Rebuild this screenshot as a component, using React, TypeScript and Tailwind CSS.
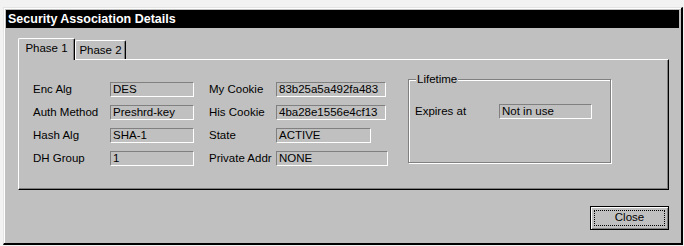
import React from "react";

type Field = { label: string; value: string; boxW: string };

const phase1Left: Field[] = [
  { label: "Enc Alg", value: "DES", boxW: "w-[84px]" },
  { label: "Auth Method", value: "Preshrd-key", boxW: "w-[84px]" },
  { label: "Hash Alg", value: "SHA-1", boxW: "w-[84px]" },
  { label: "DH Group", value: "1", boxW: "w-[84px]" },
];

const phase1Right: Field[] = [
  { label: "My Cookie", value: "83b25a5a492fa483", boxW: "w-[110px]" },
  { label: "His Cookie", value: "4ba28e1556e4cf13", boxW: "w-[110px]" },
  { label: "State", value: "ACTIVE", boxW: "w-[95px]" },
  { label: "Private Addr", value: "NONE", boxW: "w-[112px]" },
];

// sunken read-only edit box, win95 style
const ReadOnlyBox = ({ value, className }: { value: string; className: string }) => (
  <div
    className={`${className} h-[15px] flex items-center pl-[2px] border border-t-[#808080] border-l-[#808080] border-b-white border-r-white text-black whitespace-nowrap overflow-hidden`}
  >
    {value}
  </div>
);

const FieldColumn = ({ fields, labelW }: { fields: Field[]; labelW: string }) => (
  <div className="flex flex-col gap-y-[8px] mt-[9px]">
    {fields.map((f) => (
      <div key={f.label} className="flex items-center h-[15px]">
        <span className={`${labelW} whitespace-nowrap`}>{f.label}</span>
        <ReadOnlyBox value={f.value} className={f.boxW} />
      </div>
    ))}
  </div>
);

export default function App() {
  return (
    <div className="w-[684px] h-[246px] bg-[#f2f2f2] pt-[7px] pl-[3px] pr-px pb-px font-['Liberation_Sans',Arial,sans-serif] text-[11.5px] leading-none text-black">
      <div className="h-full flex flex-col bg-[#c0c0c0] border-l border-t border-l-[#e4e4e4] border-t-[#e4e4e4] border-r-2 border-b-2 border-r-black border-b-black p-[2px] shadow-[inset_1px_1px_0_#ffffff]">
        {/* title bar */}
        <div className="h-[18px] shrink-0 bg-black text-white font-bold text-[12.5px] flex items-center pl-[2px]">
          Security Association Details
        </div>

        <div className="flex-1 flex flex-col pl-[12px] pr-[10px] pt-[10px]">
          {/* tabs */}
          <div className="flex items-end h-[21px]">
            <div className="relative z-10 w-[57px] h-[22px] -mb-px bg-[#c0c0c0] border-l border-t border-l-white border-t-white border-r border-r-black rounded-t-[2px] shadow-[inset_-1px_0_0_#808080] flex items-center justify-center pb-[2px]">
              Phase 1
            </div>
            <div className="w-[51px] h-[19px] bg-[#c0c0c0] border-l border-t border-l-white border-t-white border-r border-r-black rounded-t-[2px] shadow-[inset_-1px_0_0_#808080] flex items-center justify-center pt-[2px]">
              Phase 2
            </div>
          </div>

          {/* tab page */}
          <div className="h-[131px] shrink-0 border-l border-t border-l-white border-t-white border-r border-b border-r-black border-b-black shadow-[inset_-1px_-1px_0_#808080] pl-[14px] pt-[13px] flex items-start">
            <FieldColumn fields={phase1Left} labelW="w-[77px]" />
            <div className="ml-[15px]">
              <FieldColumn fields={phase1Right} labelW="w-[67px]" />
            </div>

            <fieldset className="ml-[20px] w-[203px] h-[90px] border border-[#808080] shadow-[inset_1px_1px_0_#ffffff,1px_1px_0_#ffffff] pl-[6px]">
              <legend className="ml-[1px] px-[1px] bg-[#c0c0c0] leading-[13px]">Lifetime</legend>
              <div className="flex items-center mt-[18px] h-[15px]">
                <span className="w-[84px]">Expires at</span>
                <ReadOnlyBox value="Not in use" className="w-[93px]" />
              </div>
            </fieldset>
          </div>

          {/* buttons */}
          <div className="flex justify-end mt-[16px]">
            <button className="w-[79px] h-[24px] border border-black bg-[#c0c0c0] shadow-[inset_1px_1px_0_#ffffff,inset_-1px_-1px_0_#808080] p-[3px]">
              <span className="w-full h-full flex items-center justify-center border border-dotted border-black">
                Close
              </span>
            </button>
          </div>
        </div>
      </div>
    </div>
  );
}
